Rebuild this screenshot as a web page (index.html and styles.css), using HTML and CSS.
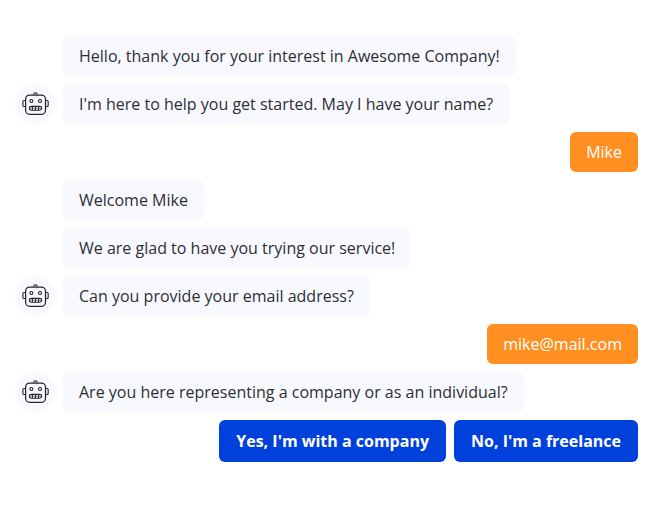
FILE: index.html
```
<!DOCTYPE html>
<html lang="en">
<head>
<meta charset="utf-8">
<title>Chat</title>
<link rel="stylesheet" href="styles.css">
</head>
<body>
<svg class="defs" aria-hidden="true">
  <symbol id="bot" viewBox="0 0 28 28">
    <g fill="none" stroke="#26272e" stroke-width="1.150">
      <rect x="4.600" y="5.100" width="19.900" height="19.200" rx="4" stroke-width="1.250"/>
      <path d="M4.500 10.500H3.200A1.300 1.300 0 0 0 1.900 11.800v3.400A1.300 1.300 0 0 0 3.200 16.500h1.300M24.600 10.500h1.300a1.300 1.300 0 0 1 1.300 1.300v3.400a1.300 1.300 0 0 1-1.300 1.300h-1.300M13.100 4.800a1.500 1.500 0 1 1 2.800 0"/>
      <circle cx="10.400" cy="11" r="1.500"/>
      <circle cx="19" cy="11" r="1.500"/>
      <rect x="8.300" y="16.300" width="12.400" height="3.900" rx="1.900"/>
      <path d="M11.400 16.500v3.500M14.500 16.500v3.500M17.600 16.500v3.500" stroke-width="1"/>
      <path d="M8.500 18.250h12" stroke-width=".5"/>
    </g>
  </symbol>
</svg>
<main class="chat">
  <div class="row"><p class="bubble">Hello, thank you for your interest in Awesome Company!</p></div>
  <div class="row"><span class="avatar"><svg><use href="#bot"/></svg></span><p class="bubble">I'm here to help you get started. May I have your name?</p></div>
  <div class="row user"><p class="bubble">Mike</p></div>
  <div class="row"><p class="bubble">Welcome Mike</p></div>
  <div class="row"><p class="bubble">We are glad to have you trying our service!</p></div>
  <div class="row"><span class="avatar"><svg><use href="#bot"/></svg></span><p class="bubble">Can you provide your email address?</p></div>
  <div class="row user"><p class="bubble">mike@mail.com</p></div>
  <div class="row"><span class="avatar"><svg><use href="#bot"/></svg></span><p class="bubble">Are you here representing a company or as an individual?</p></div>
  <div class="options"><button class="option">Yes, I'm with a company</button><button class="option">No, I'm a freelance</button></div>
</main>
</body>
</html>
```
FILE: styles.css
```
* { box-sizing: border-box; }
body { margin: 0; background: #fff; font: 16px/24px "Open Sans", sans-serif; color: #2e2f33; }
.defs { display: none; }
.chat { display: flex; flex-direction: column; gap: 8px; padding: 36px 15px 0; }
.row { display: grid; grid-template-columns: 40px auto; column-gap: 8px; justify-content: start; align-items: center; height: 40px; }
.row .bubble { grid-column: 2; }
.bubble { margin: 0; padding: 8px 16px; border-radius: 6px; background: #f8f9ff; white-space: nowrap; letter-spacing: .005px; }
.row.user { display: flex; justify-content: flex-end; }
.user .bubble { background: #ff8f20; color: #fff; }
.avatar { position: relative; width: 40px; height: 40px; border-radius: 50%; background: #f8f9ff; display: grid; place-items: center; }
.avatar::after { content: ""; position: absolute; left: 38px; top: 15px; border: 5px solid transparent; border-left-color: #f8f9ff; border-right-width: 0; }
.avatar svg { width: 28px; height: 28px; }
.options { display: flex; justify-content: flex-end; gap: 8px; }
.option { height: 42px; padding: 0 17px; border: 0; border-radius: 6px; background: #0041dc; color: #fff; font: 700 16px/24px "Open Sans", sans-serif; white-space: nowrap; }
```
